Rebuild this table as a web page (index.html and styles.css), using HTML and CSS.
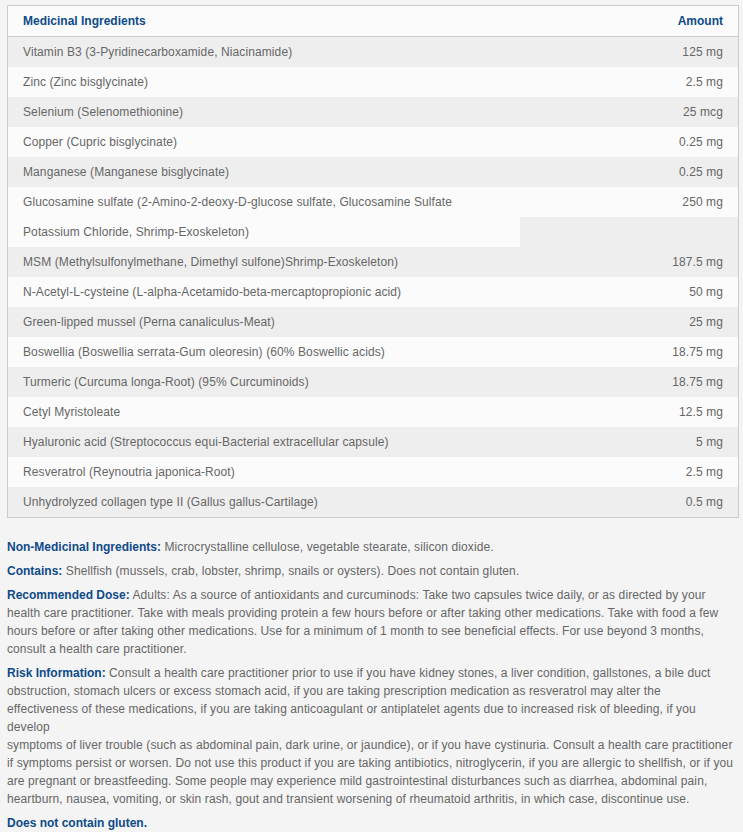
FILE: index.html
```html
<!DOCTYPE html>
<html lang="en">
<head>
    <meta charset="UTF-8">
    <title>Ingredients</title>
    <link rel="stylesheet" href="styles.css">
</head>
<body>

    <table class="ingredients">
        <thead>
            <tr>
                <th class="name">Medicinal Ingredients</th>
                <th class="amount">Amount</th>
            </tr>
        </thead>
        <tbody>
            <tr class="shade"><td>Vitamin B3 (3-Pyridinecarboxamide, Niacinamide)</td><td class="amount">125 mg</td></tr>
            <tr><td>Zinc (Zinc bisglycinate)</td><td class="amount">2.5 mg</td></tr>
            <tr class="shade"><td>Selenium (Selenomethionine)</td><td class="amount">25 mcg</td></tr>
            <tr><td>Copper (Cupric bisglycinate)</td><td class="amount">0.25 mg</td></tr>
            <tr class="shade"><td>Manganese (Manganese bisglycinate)</td><td class="amount">0.25 mg</td></tr>
            <tr><td>Glucosamine sulfate (2-Amino-2-deoxy-D-glucose sulfate, Glucosamine Sulfate</td><td class="amount">250 mg</td></tr>
            <tr class="half"><td>Potassium Chloride, Shrimp-Exoskeleton)</td></tr>
            <tr class="shade"><td>MSM (Methylsulfonylmethane, Dimethyl sulfone)Shrimp-Exoskeleton)</td><td class="amount">187.5 mg</td></tr>
            <tr><td>N-Acetyl-L-cysteine (L-alpha-Acetamido-beta-mercaptopropionic acid)</td><td class="amount">50 mg</td></tr>
            <tr class="shade"><td>Green-lipped mussel (Perna canaliculus-Meat)</td><td class="amount">25 mg</td></tr>
            <tr><td>Boswellia (Boswellia serrata-Gum oleoresin) (60% Boswellic acids)</td><td class="amount">18.75 mg</td></tr>
            <tr class="shade"><td>Turmeric (Curcuma longa-Root) (95% Curcuminoids)</td><td class="amount">18.75 mg</td></tr>
            <tr><td>Cetyl Myristoleate</td><td class="amount">12.5 mg</td></tr>
            <tr class="shade"><td>Hyaluronic acid (Streptococcus equi-Bacterial extracellular capsule)</td><td class="amount">5 mg</td></tr>
            <tr><td>Resveratrol (Reynoutria japonica-Root)</td><td class="amount">2.5 mg</td></tr>
            <tr class="shade"><td>Unhydrolyzed collagen type II (Gallus gallus-Cartilage)</td><td class="amount">0.5 mg</td></tr>
        </tbody>
    </table>

    <div class="notes">
        <p><strong>Non-Medicinal Ingredients:</strong> Microcrystalline cellulose, vegetable stearate, silicon dioxide.</p>
        <p><strong>Contains:</strong> Shellfish (mussels, crab, lobster, shrimp, snails or oysters). Does not contain gluten.</p>
        <p><strong>Recommended Dose:</strong> Adults: As a source of antioxidants and curcuminods: Take two capsules twice daily, or as directed by your health care practitioner. Take with meals providing protein a few hours before or after taking other medications. Take with food a few hours before or after taking other medications. Use for a minimum of 1 month to see beneficial effects. For use beyond 3 months, consult a health care practitioner.</p>
        <p><strong>Risk Information:</strong> Consult a health care practitioner prior to use if you have kidney stones, a liver condition, gallstones, a bile duct obstruction, stomach ulcers or excess stomach acid, if you are taking prescription medication as resveratrol may alter the effectiveness of these medications, if you are taking anticoagulant or antiplatelet agents due to increased risk of bleeding, if you develop<br>symptoms of liver trouble (such as abdominal pain, dark urine, or jaundice), or if you have cystinuria. Consult a health care practitioner if symptoms persist or worsen. Do not use this product if you are taking antibiotics, nitroglycerin, if you are allergic to shellfish, or if you are pregnant or breastfeeding. Some people may experience mild gastrointestinal disturbances such as diarrhea, abdominal pain, heartburn, nausea, vomiting, or skin rash, gout and transient worsening of rheumatoid arthritis, in which case, discontinue use.</p>
        <p><strong>Does not contain gluten.</strong></p>
    </div>

</body>
</html>
```

FILE: styles.css
```css
body {
    font-family: "Liberation Sans", Arial, sans-serif;
    font-size: 12px;
    letter-spacing: 0.1px;
    color: #666;
    background-color: #f4f4f4;
    margin: 0;
    padding: 5px 4px 0 7px;
}
.ingredients {
    width: 732px;
    border-collapse: collapse;
    border: 1px solid #ccc;
    background-color: #eee;
}
.ingredients th {
    height: 30px;
    padding: 0 15px;
    background-color: #fbfbfb;
    border-bottom: 1px solid #ccc;
    color: #0e4a8a;
    font-weight: bold;
    letter-spacing: 0;
    text-align: left;
}
.ingredients th.name {
    width: 482px;
}
.ingredients td {
    height: 30px;
    padding: 0 15px;
    background-color: #fbfbfb;
}
.ingredients .shade td {
    background-color: #eee;
}
.ingredients .amount {
    text-align: right;
}
.notes {
    padding: 20px 4px 0 0;
}
.notes p {
    margin: 0 0 6px;
    line-height: 18px;
}
.notes strong {
    color: #0e4a8a;
    letter-spacing: 0;
}
```
